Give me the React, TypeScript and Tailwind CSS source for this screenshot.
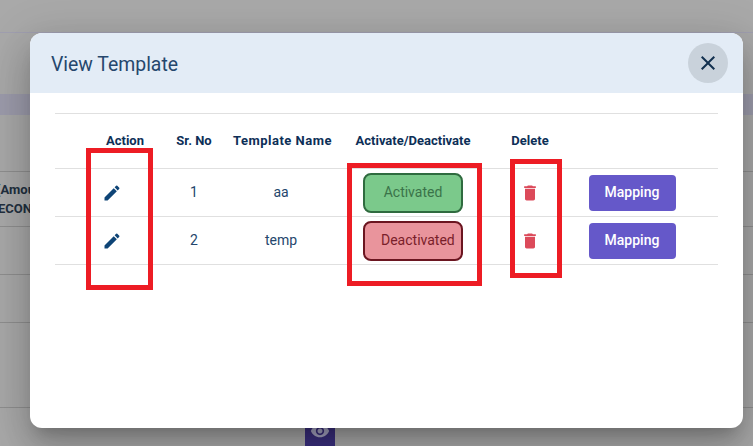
const editPath =
  "M3 17.25V21h3.75L17.81 9.94l-3.75-3.75L3 17.25zM20.71 7.04c.39-.39.39-1.02 0-1.41l-2.34-2.34a.9959.9959 0 0 0-1.41 0l-1.83 1.83 3.75 3.75 1.83-1.83z";
const deletePath =
  "M6 19c0 1.1.9 2 2 2h8c1.1 0 2-.9 2-2V7H6v12zM19 4h-3.5l-1-1h-5l-1 1H5v2h14V4z";
const closePath =
  "M19 6.41 17.59 5 12 10.59 6.41 5 5 6.41 10.59 12 5 17.59 6.41 19 12 13.41 17.59 19 19 17.59 13.41 12z";
const eyePath =
  "M12 4.5C7 4.5 2.73 7.61 1 12c1.73 4.39 6 7.5 11 7.5s9.27-3.11 11-7.5c-1.73-4.39-6-7.5-11-7.5zM12 17c-2.76 0-5-2.24-5-5s2.24-5 5-5 5 2.24 5 5-2.24 5-5 5zm0-8c-1.66 0-3 1.34-3 3s1.34 3 3 3 3-1.34 3-3-1.34-3-3-3z";

const cols = "grid grid-cols-[40px_60px_78px_96px_168px_66px_138px_17px] items-center";

function Row({ no, name, active }: { no: number; name: string; active: boolean }) {
  return (
    <div className={`${cols} h-[48px] border-b border-[#e0e0e0] text-[14px] text-[#24466c] text-center`}>
      <div />
      <div className="flex justify-start pl-[7px]">
        <svg viewBox="0 0 24 24" className="w-5 h-5 fill-[#0e4476]">
          <path d={editPath} />
        </svg>
      </div>
      <div>{no}</div>
      <div>{name}</div>
      <div className="flex justify-center">
        {active ? (
          <div className="w-[100px] h-[40px] rounded-lg border-2 border-[#2f6b3f] bg-[#7bc98b] text-[#3a7349] flex items-center justify-center">
            Activated
          </div>
        ) : (
          <div className="w-[100px] h-[40px] rounded-lg border-2 border-[#6b1520] bg-[#e9949c] text-[#7a1e2a] flex items-center pl-[16px]">
            Deactivated
          </div>
        )}
      </div>
      <div className="flex justify-center">
        <svg viewBox="0 0 24 24" className="w-5 h-5 fill-[#dc4a5a]">
          <path d={deletePath} />
        </svg>
      </div>
      <div className="flex justify-center">
        <div className="w-[87px] h-[36px] rounded bg-[#6558c9] text-white font-medium flex items-center justify-center">
          Mapping
        </div>
      </div>
      <div />
    </div>
  );
}

export default function App() {
  return (
    <div className="relative w-[753px] h-[446px] overflow-hidden bg-[#a9a9a9] font-['Roboto',sans-serif]">
      {/* page behind the dialog */}
      <div className="flex flex-col">
        <div className="h-[33px] border-b border-[#a09fb0]" />
        <div className="h-[61px]" />
        <div className="h-[21px] bg-[#9d9cac]" />
        <div className="h-[56px]" />
        <div className="h-[56px] border-t border-b border-[#8f8f8f] pt-[8px] text-[13px] leading-[19px] font-bold text-[#22303f] whitespace-nowrap">
          <div className="ml-[-4px]">(Amount</div>
          <div className="ml-[-2px]">ECONOMY</div>
        </div>
        <div className="h-[48px] border-b border-[#8f8f8f]" />
        <div className="h-[48px] border-b border-[#8f8f8f]" />
        <div className="h-[85px] border-b border-[#8f8f8f]" />
        <div className="flex justify-center">
          <div className="w-[30px] h-[40px] ml-[-113px] bg-[#3a2f7e] flex justify-center">
            <svg viewBox="0 0 24 24" className="w-5 h-5 fill-[#a8a6c4] mt-[13px]">
              <path d={eyePath} />
            </svg>
          </div>
        </div>
      </div>

      {/* dialog */}
      <div className="absolute left-[30px] top-[33px] w-[713px] h-[395px] rounded-xl bg-white overflow-hidden shadow-[0_11px_15px_-7px_rgba(0,0,0,0.2),0_24px_38px_3px_rgba(0,0,0,0.14),0_9px_46px_8px_rgba(0,0,0,0.12)]">
        <div className="h-[60px] bg-[#e3ecf6] flex items-center justify-between pl-[21px] pr-[15px]">
          <div className="text-[19.4px] text-[#25476d] pt-[3px]">View Template</div>
          <div className="w-10 h-10 rounded-full bg-[#c9d2db] flex items-center justify-center">
            <svg viewBox="0 0 24 24" className="w-6 h-6 fill-[#12304f]">
              <path d={closePath} />
            </svg>
          </div>
        </div>
        <div className="pt-[20px] pl-[25px] pr-[25px]">
          <div className={`${cols} h-[56px] border-t border-b border-[#e0e0e0] text-[13px] font-bold text-[#0d2f57] text-center whitespace-nowrap`}>
            <div />
            <div>Action</div>
            <div>Sr. No</div>
            <div className="tracking-[0.5px] pr-[3px]">Template Name</div>
            <div>Activate/Deactivate</div>
            <div>Delete</div>
            <div />
            <div />
          </div>
          <Row no={1} name="aa" active />
          <Row no={2} name="temp" active={false} />
        </div>
      </div>

      {/* red annotation boxes */}
      <div className="absolute left-[86px] top-[148px] w-[67px] h-[142px] border-[5px] border-[#ed1c24]" />
      <div className="absolute left-[347px] top-[163px] w-[135px] h-[123px] border-[5px] border-[#ed1c24]" />
      <div className="absolute left-[510px] top-[159px] w-[52px] h-[119px] border-[5px] border-[#ed1c24]" />
    </div>
  );
}
